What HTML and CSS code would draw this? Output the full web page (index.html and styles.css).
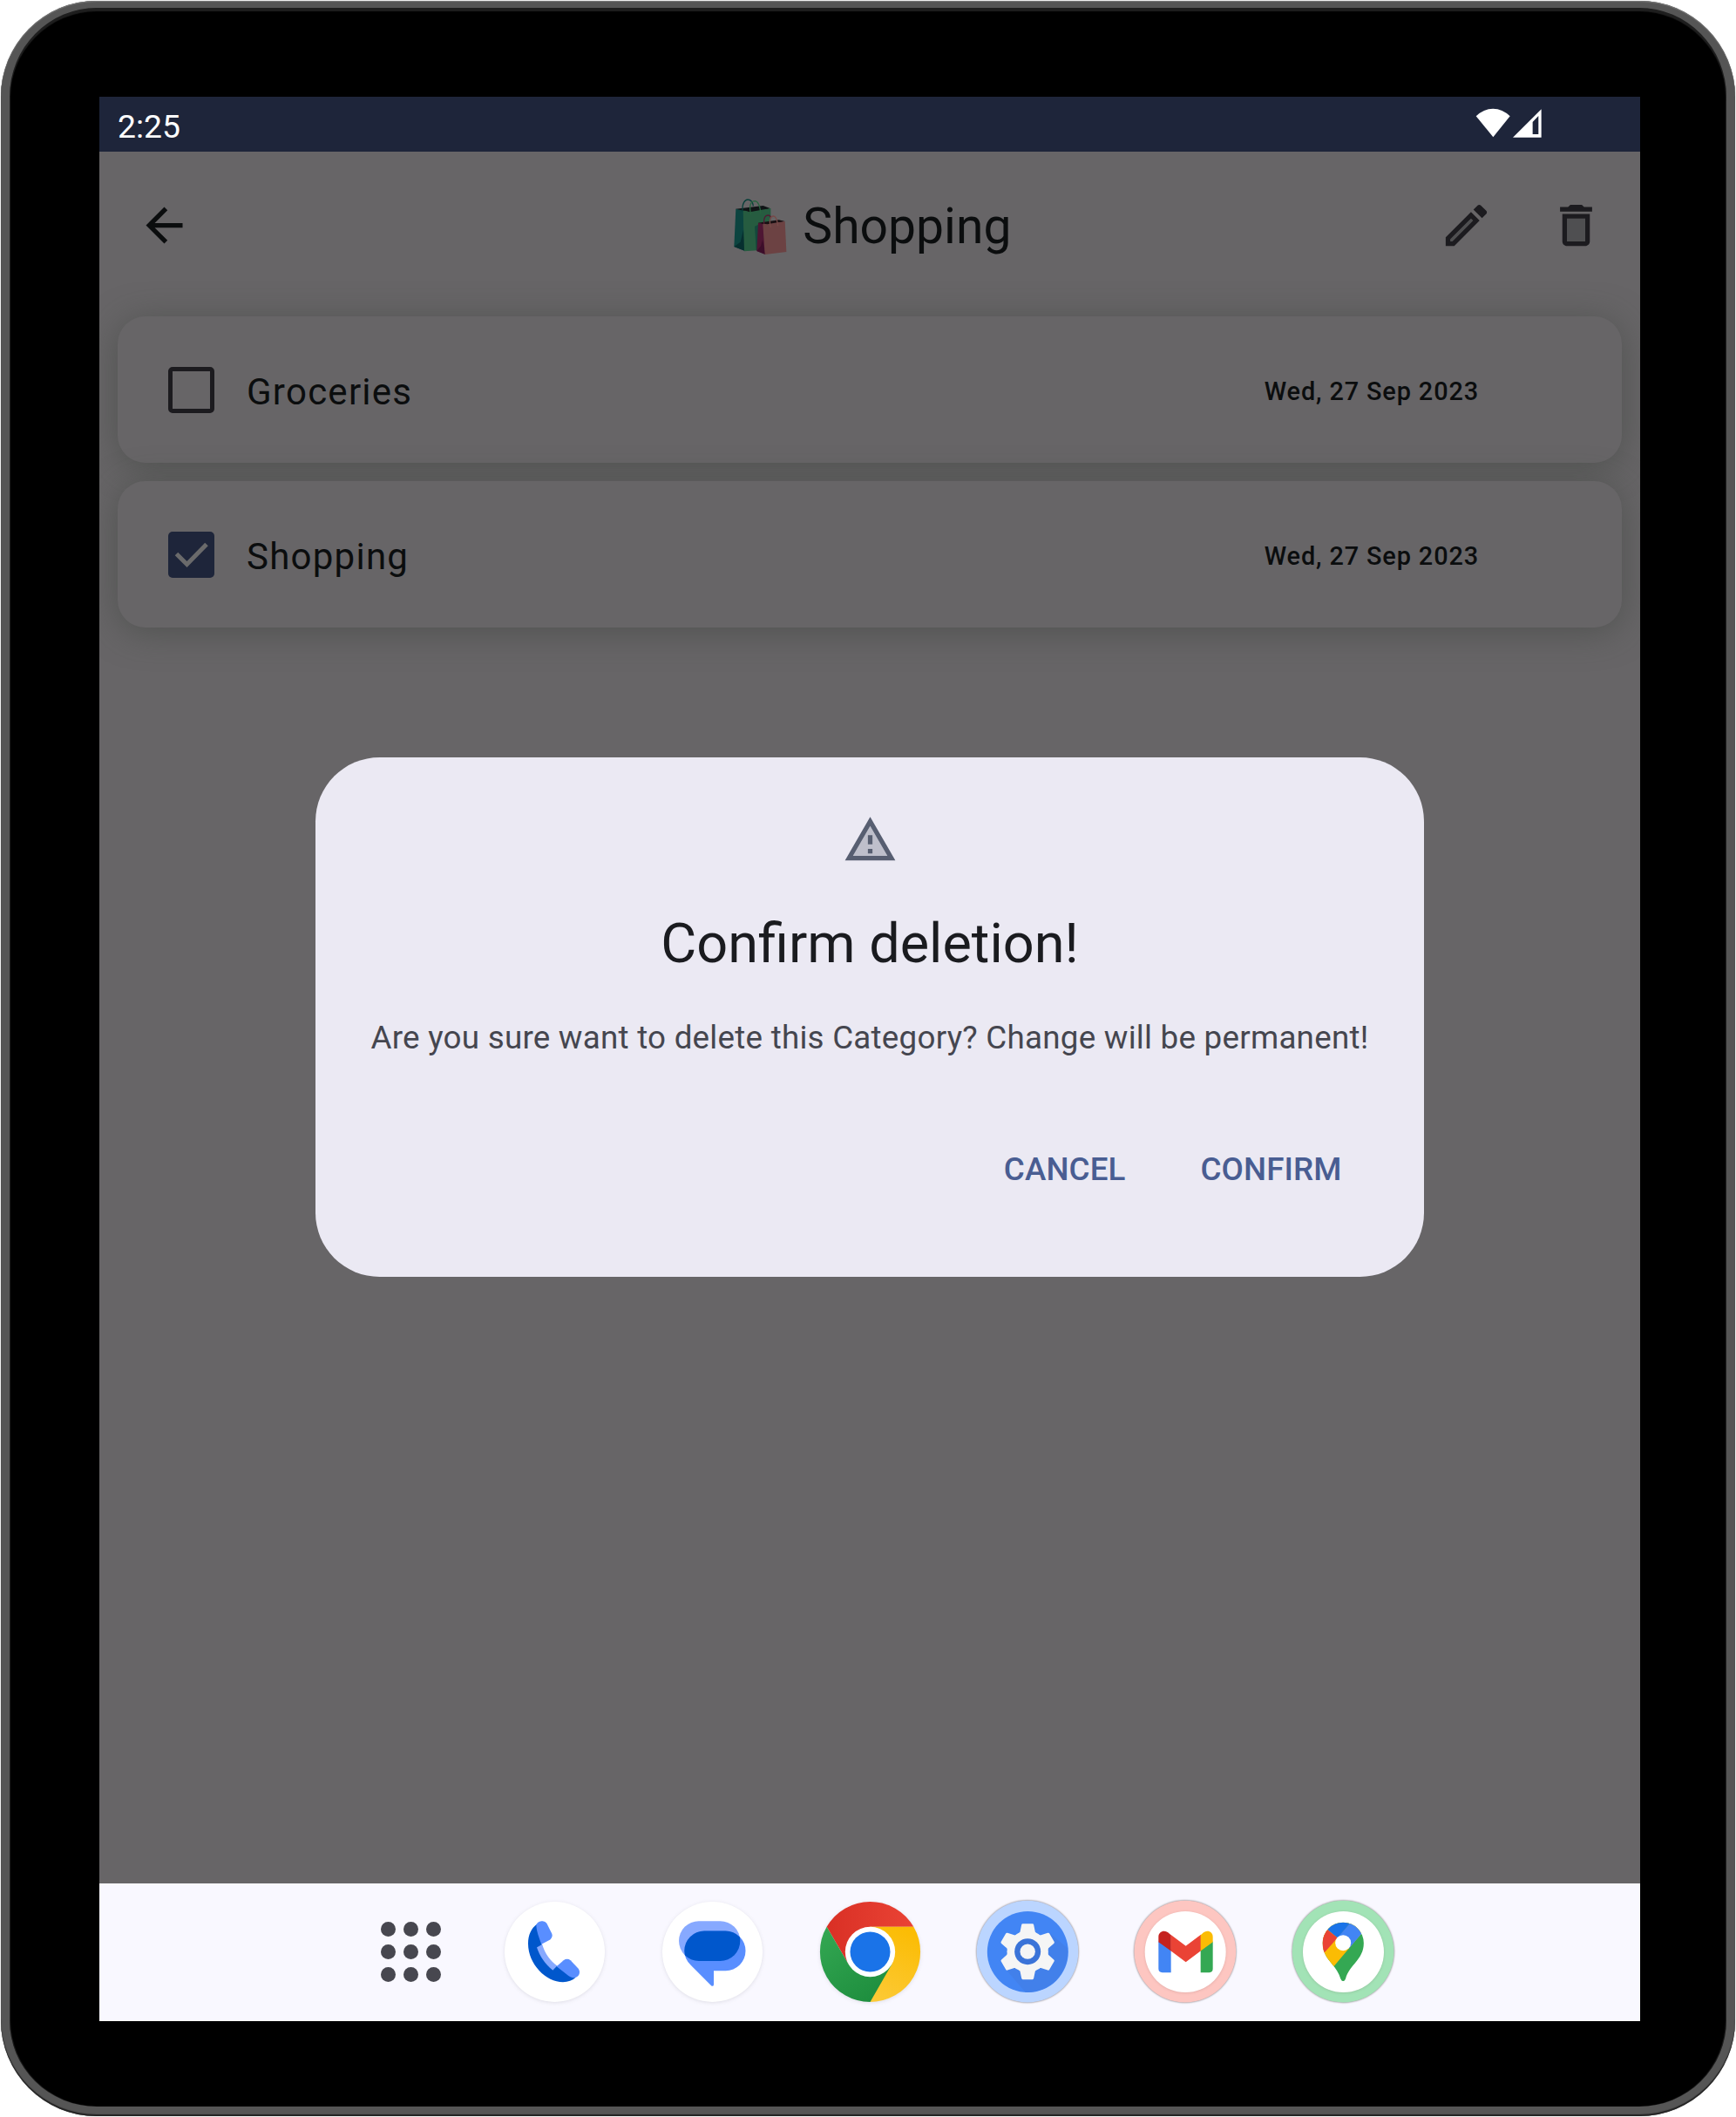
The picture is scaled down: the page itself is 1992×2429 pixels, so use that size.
FILE: index.html
```html
<!DOCTYPE html>
<html lang="en">
<head>
<meta charset="utf-8">
<title>Shopping</title>
<link rel="stylesheet" href="styles.css">
</head>
<body>
<div class="device">
  <div class="screen">
    <div class="status">
      <span class="clock">2:25</span>
      <svg class="signals" viewBox="160 100 230 106" fill="#fff">
        <path d="M162 131Q188 105 220.500 105Q253 105 279 131L221 203Z"/>
        <path fill-rule="evenodd" d="M289 204L387 107V204ZM357 151V193H377V130Z"/>
      </svg>
    </div>
    <main class="app">
      <header class="bar">
        <svg class="icon" viewBox="0 0 24 24" fill="#0b0d0e"><path d="M20 11H7.830l5.590-5.590L12 4l-8 8 8 8 1.410-1.410L7.830 13H20v-2z"/></svg>
        <h1 class="heading">
          <svg class="bags" viewBox="62 80 188 200" fill="none">
            <path fill="#101416" d="M72 118L166 107L192 117L98 132Z"/>
            <path fill="#0c4440" d="M72 118L98 124L104 263L66 248Z"/>
            <path fill="#062f2f" d="M98 190L104 263L66 248L88 232Z"/>
            <path fill="#265c40" d="M97 124L192 116V258L101 264Z"/>
            <path fill="#14483c" d="M137 178L150 172V262L142 260Z"/>
            <path fill="#101416" d="M98 122L166 110L186 117L120 129Z"/>
            <path stroke="#083f3a" stroke-width="4" d="M95 126C93 98 104 86 113 86C124 86 130 95 132 108"/>
            <path stroke="#27633f" stroke-width="4" d="M124 138C117 108 122 92 137 91C149 91 155 108 158 134"/>
            <path fill="#1a1013" d="M149 166L220 156L241 161L166 174Z"/>
            <path fill="#4e1633" d="M149 166L166 169L174 275L144 263Z"/>
            <path fill="#3c0e2a" d="M164 225L174 275L144 263L158 246Z"/>
            <path fill="#6c4243" d="M165 169L241 161L246 266L172 275Z"/>
            <path fill="#1a1013" d="M158 167L220 157L236 161L180 171Z"/>
            <path stroke="#501a33" stroke-width="4" d="M169 170C167 148 174 140 182 140Q190 140 193 148"/>
            <path stroke="#774a48" stroke-width="4" d="M192 182C185 156 192 143 201 143C211 143 215 160 217 177"/>
          </svg>
          <span>Shopping</span>
        </h1>
        <div class="actions">
          <svg class="icon" viewBox="0 0 24 24"><path fill="#4f4f51" d="M5 18.080V19h.920l9.060-9.060-.920-.920z"/><path fill="#1c1b1f" d="M20.710 7.040c.390-.390.390-1.020 0-1.410l-2.340-2.340c-.200-.200-.450-.290-.710-.290s-.510.100-.700.290l-1.830 1.830 3.750 3.750 1.830-1.830zM3 17.250V21h3.750L17.810 9.940l-3.750-3.750L3 17.250zM5.920 19H5v-.920l9.060-9.060.920.920L5.920 19z"/></svg>
          <svg class="icon" viewBox="0 0 24 24"><path fill="#4f4f51" d="M8 9h8v10H8z"/><path fill="#1c1b1f" d="M15.500 4l-1-1h-5l-1 1H5v2h14V4zM6 19c0 1.100.900 2 2 2h8c1.100 0 2-.900 2-2V7H6v12zM8 9h8v10H8V9z"/></svg>
        </div>
      </header>
      <section class="list">
        <article class="card">
          <span class="box"></span>
          <span class="name">Groceries</span>
          <time class="date">Wed, 27 Sep 2023</time>
        </article>
        <article class="card">
          <span class="box checked"><svg viewBox="0 0 53 53" fill="none" stroke="#6a6a6b" stroke-width="5"><path d="M9.500 25.500L21.500 37.500L44 14.500"/></svg></span>
          <span class="name">Shopping</span>
          <time class="date">Wed, 27 Sep 2023</time>
        </article>
      </section>
      <div class="overlay">
        <div class="dialog">
          <svg class="icon" viewBox="0 0 24 24"><path fill="#bebfcb" d="M4.470 19h15.060L12 5.990z"/><path fill="#575e71" d="M1 21h22L12 2 1 21zm3.470-2L12 5.990 19.530 19H4.470zM11 16h2v2h-2zm0-6h2v4h-2z"/></svg>
          <h2 class="title">Confirm deletion!</h2>
          <p class="message">Are you sure want to delete this Category? Change will be permanent!</p>
          <div class="buttons">
            <button class="button">CANCEL</button>
            <button class="button">CONFIRM</button>
          </div>
        </div>
      </div>
    </main>
    <nav class="dock">
      <div class="grid"><i></i><i></i><i></i><i></i><i></i><i></i><i></i><i></i><i></i></div>
      <div class="cell">
        <svg class="launcher soft" viewBox="537 125.500 345 345">
          <circle cx="709.500" cy="298" r="172.500" fill="#fff"/>
          <path fill="#87a9ff" d="M646 284L666 271C676 305 695 330 719 347L703 361C675 340 656 312 646 284Z"/>
          <path fill="#0057cc" d="M648 203C629 217 618 240 618 270C618 340 680 402 738 402C756 402 770 397 782 386L717 347L703 361C676 340 658 312 648 283L665 273L655 230Z"/>
          <path fill="#598eff" d="M646 205C650 195 658 192 668 192Q677 192 682 200L700 236Q704 246 694 256L664 272C656 250 646 225 646 205Z"/>
          <path fill="#598eff" d="M716 348L740 327Q752 319 764 327L791 356Q798 366 793 377Q787 388 772 387Q765 386 758 381Z"/>
        </svg>
      </div>
      <div class="cell">
        <svg class="launcher soft" viewBox="1080 125.500 345 345">
          <clipPath id="bubble"><rect x="1137" y="192" width="211" height="137.500" rx="68.700"/></clipPath>
          <circle cx="1252.500" cy="298" r="172.500" fill="#fff"/>
          <rect x="1137" y="192" width="211" height="137.500" rx="68.700" fill="#87a9ff"/>
          <path fill="#598eff" d="M1224 226H1298A68.500 68.500 0 0 1 1298 363H1257V411Q1256 418 1249 415L1178 344Q1156 322 1156 294A68.500 68.500 0 0 1 1224 226Z"/>
          <rect x="1156" y="226" width="210" height="137" rx="68.500" fill="#0057cc" clip-path="url(#bubble)"/>
        </svg>
      </div>
      <div class="cell">
        <svg class="launcher soft" viewBox="123 125.500 345 345">
          <linearGradient id="red"><stop stop-color="#d93025"/><stop offset="1" stop-color="#ea4335"/></linearGradient>
          <linearGradient id="yellow" x1=".6" y1="0" x2=".3" y2="1"><stop stop-color="#fbbc04"/><stop offset="1" stop-color="#fcc934"/></linearGradient>
          <linearGradient id="green" x1="0" y1="0" x2=".7" y2="1"><stop stop-color="#34a853"/><stop offset="1" stop-color="#1e8e3e"/></linearGradient>
          <path fill="url(#red)" d="M146 212A172.500 172.500 0 0 1 445 212H295.500V298L221 341Z"/>
          <path fill="url(#yellow)" d="M295.500 211.500H445A172.500 172.500 0 0 1 295.500 470.500L310 400L370 341L295.500 298Z"/>
          <path fill="url(#green)" d="M146 211.500L221 341L295.500 320L370 341L295.500 470.500A172.500 172.500 0 0 1 146 211.500Z"/>
          <circle cx="295.500" cy="298" r="86" fill="#fff"/>
          <circle cx="295.500" cy="298" r="69" fill="#1a73e8"/>
        </svg>
      </div>
      <div class="cell">
        <svg class="launcher ring" viewBox="666.500 125.500 345 345">
          <circle cx="837.500" cy="297" r="175" fill="#bbd5ff"/>
          <circle cx="838.500" cy="298" r="139.500" fill="#4285f4"/>
          <path fill="#4280ea" d="M917 236L975 285A139.500 139.500 0 0 1 830 437L765 360Z"/>
          <g transform="translate(838 297)" fill="#f5f5f5">
            <circle r="71"/>
            <path id="tooth" d="M-17 -96H17Q20 -96 21 -92L26 -68Q30 -58 42 -57L0 -30L-42 -57Q-30 -58 -26 -68L-21 -92Q-20 -96 -17 -96Z"/>
            <use href="#tooth" transform="rotate(60)"/><use href="#tooth" transform="rotate(120)"/><use href="#tooth" transform="rotate(180)"/><use href="#tooth" transform="rotate(240)"/><use href="#tooth" transform="rotate(300)"/>
            <circle r="45" fill="#3a73d8"/>
            <circle r="26"/>
          </g>
        </svg>
      </div>
      <div class="cell">
        <svg class="launcher ring" viewBox="127 125.500 345 345">
          <circle cx="300.500" cy="297" r="175" fill="#fdc6c1"/>
          <circle class="disc" cx="301.500" cy="298" r="139.500" fill="#fff"/>
          <path fill="#4285f4" d="M209 262L252 290V369H222Q209 369 209 356Z"/>
          <path fill="#34a853" d="M396 262L354 290V369H384Q396 369 396 356Z"/>
          <path fill="#ea4335" d="M251 239L303 278L355 239V294L303 333L251 294Z"/>
          <path fill="#c5221f" d="M209 264V246C209 228 231 219 246 235L252 240V295Z"/>
          <path fill="#fbbc04" d="M396 264V246C396 228 375 219 360 235L354 240V295Z"/>
        </svg>
      </div>
      <div class="cell">
        <svg class="launcher ring" viewBox="669 125.500 345 345">
          <clipPath id="pin"><path d="M843.500 196.500A71 71 0 0 1 914.500 268C914.500 325 865 342 852 391Q849 399 843.500 399Q838 399 835 391C822 342 773 325 773 268A71 71 0 0 1 843.500 196.500Z"/></clipPath>
          <circle cx="843.500" cy="297" r="175" fill="#a2e3b6"/>
          <circle class="disc" cx="844.500" cy="298" r="139.500" fill="#fff"/>
          <g clip-path="url(#pin)">
            <path fill="#34a853" d="M760 190H930V400H760Z"/>
            <path fill="#fbbc04" d="M760 190H945L805 356L760 350Z"/>
            <path fill="#4285f4" d="M870 197L822 250L843 267L865 285L930 208V190H876Z"/>
            <path fill="#1a73e8" d="M780 213L824 250L870 197V190H780Z"/>
            <path fill="#ea4335" d="M780 214L824 250L776 304L765 300V214Z"/>
          </g>
          <circle cx="843.500" cy="267" r="27" fill="#fff"/>
        </svg>
      </div>
    </nav>
  </div>
</div>
</body>
</html>
```

FILE: styles.css
```css
* {
  box-sizing: border-box;
}

body {
  margin: 0;
  padding: 1px;
  background: #fff;
  font-family: Roboto, sans-serif;
}

.device {
  position: relative;
  width: 1990px;
  height: 2427px;
  padding: 102px 99px 98px 103px;
  border: solid #555;
  border-width: 8px 10px 11px 10px;
  border-radius: 110px;
  background: #000;
  box-shadow: inset 0 4px 1px #1e1e1e, inset 1px 0 1px #222, inset -1px 0 1px #222, 0 0 1px #666;
}

/* bevel along the outer edge of the metal frame */
.device::after {
  content: "";
  position: absolute;
  inset: -8px -10px -11px;
  border-radius: 110px;
  box-shadow: inset 0 -2px 1px #222, inset 0 1px 1px #777;
  pointer-events: none;
}

.screen {
  width: 1768px;
  height: 2208px;
  display: flex;
  flex-direction: column;
  background: #676567;
}

.status {
  height: 63px;
  display: flex;
  align-items: center;
  justify-content: space-between;
  padding: 0 112px 0 21px;
  background: #1e253a;
}

.clock {
  color: #fff;
  font-size: 37.300px;
  line-height: 44px;
  padding-top: 4px;
}

.signals {
  width: 76.700px;
  height: 35.300px;
  margin-bottom: 3px;
}

.app {
  position: relative;
  height: 1987px;
  overflow: hidden;
}

.bar {
  height: 168px;
  display: grid;
  grid-template-columns: 1fr auto 1fr;
  align-items: center;
  padding: 0 42px 0 43px;
}

.icon {
  display: block;
  flex-shrink: 0;
  width: 63px;
  height: 63px;
}

.heading {
  display: flex;
  align-items: center;
  gap: 18px;
  margin: 0;
  padding: 4px 0 0 4px;
  color: #0b0d0e;
  font-size: 57px;
  font-weight: 400;
  line-height: 74px;
}

.bags {
  width: 62.700px;
  height: 66.700px;
}

.actions {
  display: flex;
  justify-content: flex-end;
  gap: 63px;
}

.list {
  display: flex;
  flex-direction: column;
  gap: 21px;
  padding: 21px;
}

.card {
  height: 168px;
  display: flex;
  align-items: center;
  padding: 0 164px 0 58px;
  border-radius: 31.500px;
  background: #676567;
  box-shadow: 0 5px 38px rgba(62, 68, 62, 0.55);
}

.box {
  width: 53px;
  height: 53px;
  border: 5px solid #1c1b1f;
  border-radius: 5px;
}

.box.checked {
  border: 0;
  background: #1e253a;
}

.box svg {
  display: block;
}

.name {
  flex: 1;
  padding: 4px 0 0 37px;
  color: #0b0d0e;
  font-size: 42px;
  letter-spacing: 1.250px;
}

.date {
  padding-top: 4px;
  color: #0b0d0e;
  font-size: 28.875px;
  font-weight: 500;
  letter-spacing: 0.880px;
}

.overlay {
  position: absolute;
  inset: 0;
  display: grid;
  place-items: center;
  padding-bottom: 1px;
}

.dialog {
  width: 1272px;
  height: 596px;
  display: flex;
  flex-direction: column;
  align-items: center;
  padding: 63px 63px 0;
  border-radius: 73.500px;
  background: #ebe9f3;
}

.title {
  margin: 46px 0 40px;
  color: #1a1b1f;
  font-size: 63px;
  font-weight: 400;
  line-height: 84px;
}

.message {
  margin: 0;
  color: #45464f;
  font-size: 36.750px;
  line-height: 52px;
  letter-spacing: 0.250px;
  white-space: nowrap;
}

.buttons {
  align-self: flex-end;
  display: flex;
  gap: 23px;
  margin-top: 61px;
}

.button {
  height: 126px;
  padding: 0 31.500px;
  border: 0;
  background: none;
  color: #495d92;
  font: 500 36.750px Roboto, sans-serif;
  letter-spacing: 0.100px;
}

.dock {
  height: 158px;
  display: flex;
  align-items: center;
  padding: 0 0 2px 322.500px;
  background: #f9f8ff;
}

.grid {
  display: grid;
  grid-template-columns: repeat(3, 17.500px);
  gap: 8.500px;
  margin: 1px 40.300px 0 0;
}

.grid i {
  height: 17.500px;
  border-radius: 50%;
  background: #47474f;
}

.cell {
  width: 180.800px;
  display: flex;
  justify-content: center;
}

.launcher {
  width: 115px;
  height: 115px;
  overflow: visible;
}

.soft {
  filter: drop-shadow(0 1px 2px rgba(40, 40, 60, 0.12));
}

.ring {
  filter: drop-shadow(0 0 1.200px rgba(60, 50, 50, 0.7));
}

.disc {
  filter: drop-shadow(0 2px 4px rgba(80, 40, 40, 0.15));
}
```
